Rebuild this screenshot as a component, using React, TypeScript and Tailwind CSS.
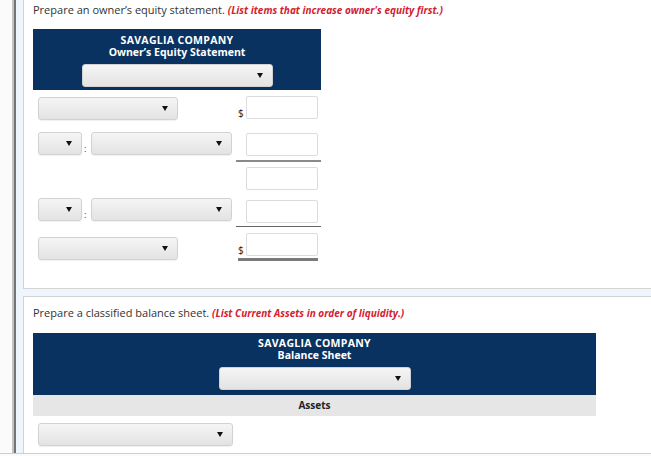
import React from "react";

const Tri = () => (
  <svg width="6" height="5" viewBox="0 0 6 5" className="block">
    <path d="M0 0 L6 0 L3 5 Z" fill="#111" />
  </svg>
);

const Sel = ({ w, cls = "" }: { w: string; cls?: string }) => (
  <div
    className={`${w} ${cls} h-[23px] rounded-[3px] border border-[#d2d2d2] bg-gradient-to-b from-[#f5f5f5] to-[#e3e3e3] flex items-center justify-end pr-[9px] shadow-[0_1px_1px_rgba(0,0,0,0.06)]`}
  >
    <Tri />
  </div>
);

const Inp = ({ cls = "" }: { cls?: string }) => (
  <div className={`w-[72px] h-[23px] bg-white border border-[#dcdcdc] rounded-[2px] ${cls}`} />
);

const Dollar = () => (
  <div className="w-[10px] pl-[2px] text-[10px] leading-[10px] text-[#222] self-end pb-[1px]">$</div>
);

export default function App() {
  const font = { fontFamily: '"Open Sans", "Noto Sans", sans-serif' };
  return (
    <div className="w-[651px] h-[456px] overflow-hidden bg-white flex flex-col" style={font}>
      <div className="flex h-[453px]">
        <div className="w-[12px] bg-[#fbfbfb]" />
        <div className="w-[2px] bg-[#c4c4c4]" />
        <div className="w-[2px] bg-[#737373]" />
        <div className="flex-1 bg-[#eef5fc] pl-[7px] flex flex-col">
          {/* Card 1 */}
          <div className="bg-white border-l border-b border-[#d3d3d3] h-[289px] pl-[9px] pt-[3px]">
            <div className="text-[11px] leading-[14px] text-[#333] whitespace-nowrap">
              Prepare an owner’s equity statement.{" "}
              <span className="text-[#d42030] font-bold italic text-[10px]">(List items that increase owner's equity first.)</span>
            </div>
            <div className="mt-[12px] w-[288px] h-[61px] bg-[#0a3261] pt-[5px] flex flex-col items-center">
              <div className="text-white font-bold text-[10.5px] leading-[12px] tracking-[0.3px]">SAVAGLIA COMPANY</div>
              <div className="text-white font-bold text-[10.5px] leading-[12px]">Owner’s Equity Statement</div>
              <Sel w="w-[191px]" cls="mt-[6px]" />
            </div>
            <div className="w-[288px] pl-[5px]">
              {/* Row 1 */}
              <div className="flex h-[38px]">
                <div className="w-[198px]">
                  <Sel w="w-[140px]" cls="mt-[7px]" />
                </div>
                <div className="w-[85px] flex items-start">
                  <div className="flex mt-[6px]">
                    <Dollar />
                    <Inp />
                  </div>
                </div>
              </div>
              {/* Row 2 */}
              <div className="flex h-[34px]">
                <div className="w-[198px] flex items-start">
                  <Sel w="w-[44px]" cls="mt-[4px]" />
                  <div className="w-[9px] text-[9px] leading-[10px] text-[#333] mt-[16px] pl-[2px]">:</div>
                  <Sel w="w-[141px]" cls="mt-[4px]" />
                </div>
                <div className="w-[85px] h-[34px] border-b-2 border-[#8a8a8a] pt-[5px] pl-[10px]">
                  <Inp />
                </div>
              </div>
              {/* Row 3 */}
              <div className="flex h-[33px]">
                <div className="w-[198px]" />
                <div className="w-[85px] pt-[5px] pl-[10px]">
                  <Inp />
                </div>
              </div>
              {/* Row 4 */}
              <div className="flex h-[32px]">
                <div className="w-[198px] flex items-start">
                  <Sel w="w-[44px]" cls="mt-[3px]" />
                  <div className="w-[9px] text-[9px] leading-[10px] text-[#333] mt-[15px] pl-[2px]">:</div>
                  <Sel w="w-[141px]" cls="mt-[3px]" />
                </div>
                <div className="w-[85px] h-[32px] border-b border-[#666] pt-[5px] pl-[10px]">
                  <Inp />
                </div>
              </div>
              {/* Row 5 */}
              <div className="flex h-[36px]">
                <div className="w-[198px]">
                  <Sel w="w-[140px]" cls="mt-[10px]" />
                </div>
                <div className="w-[85px] pl-[2px]">
                  <div className="flex mt-[6px] w-[80px] border-b-[3px] border-[#7a7a7a] pb-[2px]">
                    <div className="w-[8px] text-[10px] leading-[10px] text-[#222] self-end pb-[1px]">$</div>
                    <Inp />
                  </div>
                </div>
              </div>
            </div>
          </div>
          <div className="h-[7px]" />
          {/* Card 2 */}
          <div className="flex-1 bg-white border-l border-t border-[#d3d3d3] pl-[9px] pt-[9px]">
            <div className="text-[11px] leading-[14px] text-[#333] whitespace-nowrap">
              Prepare a classified balance sheet.{" "}
              <span className="text-[#d42030] font-bold italic text-[10px]">(List Current Assets in order of liquidity.)</span>
            </div>
            <div className="mt-[13px] w-[563px] h-[62px] bg-[#0a3261] pt-[4px] flex flex-col items-center">
              <div className="text-white font-bold text-[10.5px] leading-[12px] tracking-[0.3px]">SAVAGLIA COMPANY</div>
              <div className="text-white font-bold text-[10.5px] leading-[12px]">Balance Sheet</div>
              <Sel w="w-[192px]" cls="mt-[6px]" />
            </div>
            <div className="w-[563px] h-[21px] bg-[#e6e6e6] flex items-center justify-center text-[10px] font-bold text-[#222]">
              Assets
            </div>
            <div className="pl-[5px] pt-[7px]">
              <Sel w="w-[195px]" />
            </div>
          </div>
        </div>
      </div>
      <div className="h-[1px] bg-[#cfcfcf]" />
      <div className="flex-1 bg-[#fafafa]" />
    </div>
  );
}
